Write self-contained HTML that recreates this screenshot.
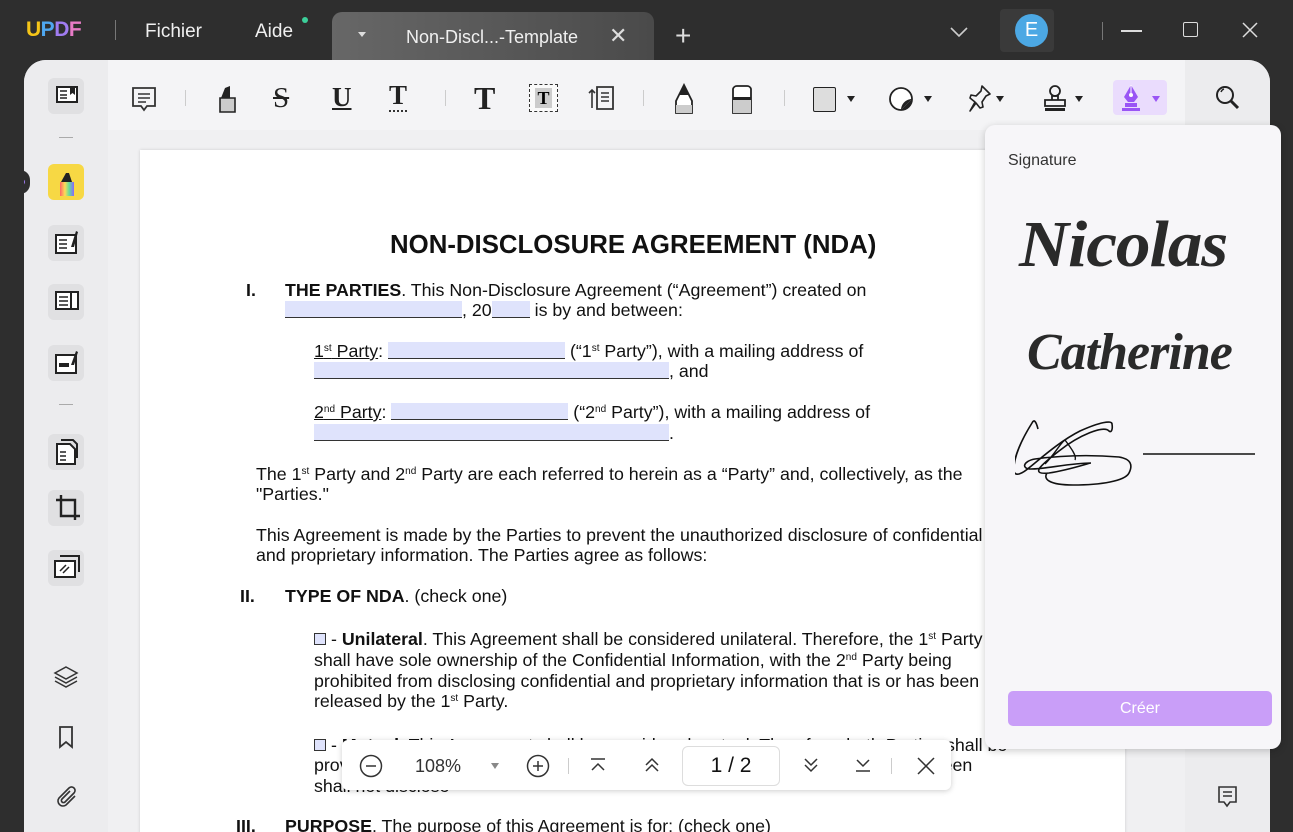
<!DOCTYPE html>
<html><head><meta charset="utf-8"><style>
*{margin:0;padding:0;box-sizing:border-box}
body{width:1293px;height:832px;overflow:hidden;background:#2e2e2e;font-family:"Liberation Sans",sans-serif;position:relative}
.abs{position:absolute}
.tb{color:#f0f0f0;font-size:19px}
#main{left:24px;top:60px;width:1246px;height:772px;background:#f4f4f6;border-radius:22px 22px 0 0;overflow:hidden}
#side{left:0;top:0;width:84px;height:772px;background:#ececee}
.tile{position:absolute;left:24px;width:36px;height:36px;background:#e0e0e2;border-radius:6px}
.sep{position:absolute;left:35px;width:14px;height:1px;background:#aaa}
.ic{position:absolute}
#doc{left:84px;top:70px;width:1077px;height:702px;background:#f0f0f2}
#page{left:32px;top:20px;width:985px;height:700px;background:#fff;box-shadow:0 0 3px rgba(0,0,0,.15)}
.t{position:absolute;font-size:17.8px;color:#111;white-space:nowrap;line-height:20px}
.f{background:#dfe3fc;border-bottom:1px solid #333;display:inline-block;height:17px;vertical-align:-2px}
sup{font-size:10px;vertical-align:6px;line-height:0}
#rs{left:1161px;top:0;width:85px;height:772px;background:#ececee}
#sig{left:985px;top:125px;width:296px;height:624px;background:#f7f6f9;border-radius:10px;box-shadow:0 2px 8px rgba(0,0,0,.2)}
#zb{left:342px;top:740px;width:609px;height:50px;background:#fff;border-radius:6px;box-shadow:0 1px 6px rgba(0,0,0,.2)}
</style></head><body>
<div class="abs" style="left:26px;top:18px;font-weight:bold;font-size:21px;letter-spacing:-0.5px"><span style="color:#f5c518">U</span><span style="color:#4fa7f0">P</span><span style="color:#a07cf0">D</span><span style="color:#e87cc7">F</span></div>
<div class="abs" style="left:115px;top:20px;width:1px;height:20px;background:#777"></div>
<div class="abs tb" style="left:145px;top:21px">Fichier</div>
<div class="abs tb" style="left:255px;top:21px">Aide</div>
<div class="abs" style="left:302px;top:17px;width:6px;height:6px;border-radius:50%;background:#3ccf9a"></div>
<div class="abs" style="left:332px;top:12px;width:322px;height:50px;border-radius:10px 10px 0 0;background:linear-gradient(90deg,#676767,#4a4a4a)"></div>
<div class="abs" style="left:358px;top:32px;border:4px solid transparent;border-top:5px solid #ddd"></div>
<div class="abs tb" style="left:406px;top:27px;font-size:18px">Non-Discl...-Template</div>
<div class="abs tb" style="left:609px;top:23px;font-size:22px;color:#ddd">✕</div>
<div class="abs tb" style="left:675px;top:22px;font-size:28px;font-weight:300;color:#ddd;line-height:28px">+</div>
<svg class="abs" style="left:950px;top:26px" width="18" height="12"><path d="M1 2l8 8 8-8" stroke="#ccc" stroke-width="1.6" fill="none"/></svg>
<div class="abs" style="left:1000px;top:9px;width:54px;height:43px;background:#3a3a3a;border-radius:4px"></div>
<div class="abs" style="left:1015px;top:14px;width:33px;height:33px;border-radius:50%;background:#4ca8e4;color:#fff;font-size:20px;text-align:center;line-height:33px">E</div>
<div class="abs" style="left:1102px;top:22px;width:1px;height:18px;background:#777"></div>
<div class="abs" style="left:1121px;top:30px;width:21px;height:1.5px;background:#ddd"></div>
<div class="abs" style="left:1183px;top:22px;width:15px;height:15px;border:1.5px solid #ddd;border-radius:2px"></div>
<svg class="abs" style="left:1242px;top:22px" width="16" height="16"><path d="M1 1l14 14M15 1L1 15" stroke="#ddd" stroke-width="1.5"/></svg>

<div id="main" class="abs">
 <div id="side" class="abs">
  <div class="tile" style="top:18px"></div>
  <svg class="ic" style="left:31px;top:24px" width="24" height="22"><path d="M2 3h20v15H2z" fill="#fff" stroke="#222" stroke-width="2"/><path d="M5 7h7M5 11h7M5 14h7" stroke="#222" stroke-width="1.6"/><path d="M15 2h5v9l-2.5-2-2.5 2z" fill="#222"/></svg>
  <div class="sep" style="top:77px"></div>
  <div class="abs" style="left:-4px;top:110px;width:10px;height:24px;background:#2e2e2e;border-radius:0 12px 12px 0"></div>
  <div class="abs" style="left:-5px;top:119px;width:6px;height:6px;border-radius:50%;background:#a07cf0"></div>
  <div class="tile" style="top:104px;background:#f7d844"></div>
  <svg class="ic" style="left:32px;top:108px" width="22" height="30"><path d="M5 14l5-9h3l3 9z" fill="#222"/><path d="M4 14h14v14H4z" fill="url(#rb)"/><defs><linearGradient id="rb"><stop offset="0" stop-color="#f66"/><stop offset=".35" stop-color="#fd5"/><stop offset=".65" stop-color="#6d9"/><stop offset="1" stop-color="#86f"/></linearGradient></defs></svg>
  <div class="tile" style="top:165px"></div>
  <svg class="ic" style="left:30px;top:168px" width="26" height="28"><path d="M2 7h20v18H2z" fill="#fff" stroke="#222" stroke-width="2"/><path d="M5 12h8M5 16h8M5 20h8" stroke="#222" stroke-width="1.6"/><path d="M17 19l5-16 2 1-4 15z" fill="#222"/></svg>
  <div class="tile" style="top:224px"></div>
  <svg class="ic" style="left:30px;top:230px" width="26" height="22"><path d="M2 2h22v17H2zM17 2v17" fill="#fff" stroke="#222" stroke-width="2"/><path d="M5 7h9M5 11h9M5 15h9" stroke="#222" stroke-width="1.6"/></svg>
  <div class="tile" style="top:285px"></div>
  <svg class="ic" style="left:30px;top:288px" width="26" height="28"><path d="M2 7h20v18H2z" fill="#fff" stroke="#222" stroke-width="2"/><path d="M5 15h10v4H5z" fill="#222"/><path d="M17 17l5-14 2 1-4 13z" fill="#222"/></svg>
  <div class="sep" style="top:344px"></div>
  <div class="tile" style="top:374px"></div>
  <svg class="ic" style="left:31px;top:378px" width="24" height="28"><path d="M2 6h13l5 5v15H2z" fill="#fff" stroke="#222" stroke-width="2"/><path d="M6 2h12l4 4v14" fill="none" stroke="#222" stroke-width="2"/><path d="M5 14h6M5 18h6M5 22h6" stroke="#222" stroke-width="1.5"/></svg>
  <div class="tile" style="top:430px"></div>
  <svg class="ic" style="left:30px;top:433px" width="28" height="30"><path d="M7 2v21h19M2 7h19v20" fill="none" stroke="#222" stroke-width="2.4"/></svg>
  <div class="tile" style="top:490px"></div>
  <svg class="ic" style="left:29px;top:494px" width="28" height="26"><path d="M7 2h19v16" fill="none" stroke="#222" stroke-width="2"/><path d="M2 7h20v16H2z" fill="#fff" stroke="#222" stroke-width="2"/><path d="M7 17l6-6M10 19l6-6" stroke="#222" stroke-width="1.5"/></svg>
  <svg class="ic" style="left:29px;top:605px" width="26" height="24"><path d="M13 2l11 6-11 6-11-6z M2 12l11 6 11-6 M2 16l11 6 11-6" fill="none" stroke="#333" stroke-width="1.5"/></svg>
  <svg class="ic" style="left:34px;top:665px" width="16" height="24"><path d="M2 2h12v20l-6-5-6 5z" fill="none" stroke="#333" stroke-width="1.8"/></svg>
  <svg class="ic" style="left:30px;top:725px" width="26" height="26"><path d="M21 11l-9 9a5 5 0 01-7-7l10-10a3.5 3.5 0 015 5l-9 9a2 2 0 01-3-3l8-8" fill="none" stroke="#333" stroke-width="1.6"/></svg>
 </div>
 <div id="doc" class="abs">
  <div id="page" class="abs">
   <div class="t" style="left:250px;top:82px;font-size:25.8px;font-weight:bold;line-height:26px">NON-DISCLOSURE AGREEMENT (NDA)</div>
   <div class="t" style="left:106px;top:130px;font-weight:bold">I.</div>
   <div class="t" style="left:145px;top:130px"><b>THE PARTIES</b>. This Non-Disclosure Agreement (“Agreement”) created on</div>
   <div class="t" style="left:145px;top:150px"><span class="f" style="width:177px"></span>, 20<span class="f" style="width:38px"></span> is by and between:</div>
   <div class="t" style="left:174px;top:191px"><u>1<sup>st</sup> Party</u>: <span class="f" style="width:177px"></span> (“1<sup>st</sup> Party”), with a mailing address of</div>
   <div class="t" style="left:174px;top:211px"><span class="f" style="width:355px"></span>, and</div>
   <div class="t" style="left:174px;top:252px"><u>2<sup>nd</sup> Party</u>: <span class="f" style="width:177px"></span> (“2<sup>nd</sup> Party”), with a mailing address of</div>
   <div class="t" style="left:174px;top:273px"><span class="f" style="width:355px"></span>.</div>
   <div class="t" style="left:116px;top:314px">The 1<sup>st</sup> Party and 2<sup>nd</sup> Party are each referred to herein as a “Party” and, collectively, as the</div>
   <div class="t" style="left:116px;top:334px">"Parties."</div>
   <div class="t" style="left:116px;top:375px">This Agreement is made by the Parties to prevent the unauthorized disclosure of confidential</div>
   <div class="t" style="left:116px;top:395px">and proprietary information. The Parties agree as follows:</div>
   <div class="t" style="left:100px;top:436px;font-weight:bold">II.</div>
   <div class="t" style="left:145px;top:436px"><b>TYPE OF NDA</b>. (check one)</div>
   <div class="t" style="left:174px;top:479px"><span style="display:inline-block;width:12px;height:12px;border:1px solid #333;background:#dfe3fc"></span> - <b>Unilateral</b>. This Agreement shall be considered unilateral. Therefore, the 1<sup>st</sup> Party</div>
   <div class="t" style="left:174px;top:500px">shall have sole ownership of the Confidential Information, with the 2<sup>nd</sup> Party being</div>
   <div class="t" style="left:174px;top:521px">prohibited from disclosing confidential and proprietary information that is or has been</div>
   <div class="t" style="left:174px;top:541px">released by the 1<sup>st</sup> Party.</div>
   <div class="t" style="left:174px;top:585px"><span style="display:inline-block;width:12px;height:12px;border:1px solid #333;background:#dfe3fc"></span> - <b>Mutual</b>. This Agreement shall be considered mutual. Therefore, both Parties shall be</div>
   <div class="t" style="left:174px;top:605px">provided with Confidential Information, and both Parties shall be prohibited between</div>
   <div class="t" style="left:174px;top:626px">shall not disclose</div>
   <div class="t" style="left:96px;top:666px;font-weight:bold">III.</div>
   <div class="t" style="left:145px;top:666px"><b>PURPOSE</b>. The purpose of this Agreement is for: (check one)</div>
  </div>
 </div>
 <div id="rs" class="abs"></div>
 <svg class="ic" style="left:1192px;top:724px" width="24" height="26"><path d="M3 3h17v15h-6l-3 4-3-4H3z" fill="none" stroke="#333" stroke-width="1.6"/><path d="M7 8h9M7 12h9" stroke="#333" stroke-width="1.4"/></svg>
 <svg class="ic" style="left:107px;top:26px" width="28" height="28"><path d="M2 2h22v18h-8l-3 4-3-4H2z" fill="none" stroke="#333" stroke-width="1.8"/><path d="M7 8h12M7 12h12M7 16h8" stroke="#333" stroke-width="1.5"/></svg>
 <div class="abs" style="left:161px;top:30px;width:1px;height:16px;background:#ccc"></div>
 <svg class="ic" style="left:192px;top:24px" width="24" height="30"><path d="M5 14l4-10 5-2v12z" fill="#222"/><path d="M4 14h15v14H4z" fill="#ccc" stroke="#222" stroke-width="1.6"/></svg>
 <div class="abs" style="left:249px;top:22px;font-family:'Liberation Serif',serif;font-size:29px;color:#222;text-decoration:line-through">S</div>
 <div class="abs" style="left:308px;top:22px;font-family:'Liberation Serif',serif;font-weight:bold;font-size:27px;color:#222;text-decoration:underline">U</div>
 <div class="abs" style="left:365px;top:21px;font-family:'Liberation Serif',serif;font-weight:bold;font-size:27px;color:#222;border-bottom:2px dotted #333;line-height:29px">T</div>
 <div class="abs" style="left:421px;top:30px;width:1px;height:16px;background:#ccc"></div>
 <div class="abs" style="left:450px;top:20px;font-family:'Liberation Serif',serif;font-weight:bold;font-size:32px;color:#222">T</div>
 <div class="abs" style="left:505px;top:24px;width:29px;height:28px;border:1.5px dashed #333;background:#fafafa;font-family:'Liberation Serif',serif;font-weight:bold;font-size:18px;text-align:center;line-height:26px"><span style="background:#ccc;padding:0 2px">T</span></div>
 <svg class="ic" style="left:563px;top:24px" width="30" height="28"><path d="M10 3h16v22H10z" fill="none" stroke="#333" stroke-width="1.8"/><path d="M14 9h8M14 13h8M14 17h8" stroke="#333" stroke-width="1.4"/><path d="M5 24V6M2 9l3-3 3 3" fill="none" stroke="#333" stroke-width="1.6"/></svg>
 <div class="abs" style="left:619px;top:30px;width:1px;height:16px;background:#ccc"></div>
 <svg class="ic" style="left:648px;top:23px" width="24" height="32"><path d="M4 18l8-16 8 16v12H4z" fill="#fff" stroke="#222" stroke-width="1.8"/><path d="M7 12l5-10 5 10z" fill="#222"/><path d="M4 22h16v8H4z" fill="#ccc"/></svg>
 <svg class="ic" style="left:706px;top:25px" width="24" height="30"><path d="M3 4a4 4 0 014-3h10a4 4 0 014 3v24H3z" fill="#fff" stroke="#222" stroke-width="1.8"/><path d="M3 12h18v3H3z" fill="#222"/><path d="M3 15h18v13H3z" fill="#ccc"/></svg>
 <div class="abs" style="left:760px;top:30px;width:1px;height:16px;background:#ccc"></div>
 <div class="abs" style="left:789px;top:27px;width:23px;height:25px;border:1.6px solid #222;border-radius:2px;background:#ddd"></div>
 <div class="abs" style="left:823px;top:36px;border:4px solid transparent;border-top:6px solid #222"></div>
 <svg class="ic" style="left:863px;top:25px" width="28" height="28"><circle cx="14" cy="14" r="11" fill="#fff" stroke="#222" stroke-width="1.8"/><path d="M25 14a11 11 0 01-11 11L25 14z" fill="#222"/><path d="M14 25c0-6 5-11 11-11" fill="#222"/></svg>
 <div class="abs" style="left:900px;top:36px;border:4px solid transparent;border-top:6px solid #222"></div>
 <svg class="ic" style="left:942px;top:24px" width="28" height="30"><path d="M16 2l8 8-4 2-4 6 1 5-3 1-4-5-6 8 5-9-5-4 1-3 5 1 5-5z" fill="none" stroke="#222" stroke-width="1.6" stroke-linejoin="round"/></svg>
 <div class="abs" style="left:972px;top:36px;border:4px solid transparent;border-top:6px solid #222"></div>
 <svg class="ic" style="left:1018px;top:24px" width="26" height="30"><circle cx="13" cy="7" r="5" fill="none" stroke="#222" stroke-width="1.8"/><path d="M10 12h6v4H10zM3 16h20v6H3z" fill="none" stroke="#222" stroke-width="1.8"/><path d="M3 24h20v3H3z" fill="#222"/></svg>
 <div class="abs" style="left:1051px;top:36px;border:4px solid transparent;border-top:6px solid #222"></div>
 <div class="abs" style="left:1089px;top:20px;width:54px;height:35px;background:#eadcfd;border-radius:4px"></div>
 <svg class="ic" style="left:1095px;top:23px" width="24" height="30"><path d="M12 2l7 12-4 5H9l-4-5z" fill="#9a55f5"/><circle cx="12" cy="12" r="2" fill="#fff"/><path d="M12 2v8" stroke="#fff" stroke-width="1"/><path d="M6 20h12v4H6zM3 25h18v3H3z" fill="#9a55f5"/></svg>
 <div class="abs" style="left:1128px;top:36px;border:4px solid transparent;border-top:6px solid #9a55f5"></div>
 <svg class="ic" style="left:1191px;top:25px" width="26" height="26"><circle cx="10" cy="10" r="8" fill="none" stroke="#222" stroke-width="2"/><path d="M16 16l7 7" stroke="#222" stroke-width="3"/><path d="M6 7a5 5 0 013-3" stroke="#222" stroke-width="1.4" fill="none"/></svg>
</div>

<div id="sig" class="abs">
 <div class="abs" style="left:23px;top:27px;font-size:16px;color:#333">Signature</div>
 <div class="abs" style="left:34px;top:82px;font-family:'Liberation Serif',serif;font-style:italic;font-weight:bold;font-size:66px;color:#2a2a2a;letter-spacing:-1px;transform:scaleX(1.05);transform-origin:left">Nicolas</div>
 <div class="abs" style="left:42px;top:198px;font-family:'Liberation Serif',serif;font-style:italic;font-weight:bold;font-size:52px;color:#2a2a2a;letter-spacing:-1px">Catherine</div>
 <svg class="abs" style="left:30px;top:283px" width="250" height="80"><path d="M23 21c-2-8-4-10-6-6-10 16-19 35-18 48 1 6 8 3 16-4 10-8 30-26 50-36 20-9 32-11 32-7 1 6-1 9-3 7-5-6-30 4-50 20-18 14-30 24-10 22 20-3 40-10 42-10-20 0-46 6-60 6-10 0-8-8 4-10 30-4 60-4 84-2 12 2 14 8 10 16-4 8-28 12-56 12-24 0-30-6-26-12" fill="none" stroke="#111" stroke-width="1.6"/><path d="M30 56c10-10 16-22 20-24 6 8 12 16 10 20" fill="none" stroke="#111" stroke-width="1.4"/><path d="M128 46h112" stroke="#111" stroke-width="1.6"/></svg>
 <div class="abs" style="left:23px;top:566px;width:264px;height:35px;background:#c99ef8;border-radius:5px;color:#fff;font-size:16px;text-align:center;line-height:35px">Créer</div>
</div>

<div id="zb" class="abs">
 <svg class="abs" style="left:17px;top:14px" width="24" height="24"><circle cx="12" cy="12" r="10.5" fill="none" stroke="#333" stroke-width="1.5"/><path d="M7 12h10" stroke="#333" stroke-width="1.5"/></svg>
 <div class="abs" style="left:73px;top:16px;font-size:18px;color:#333">108%</div>
 <div class="abs" style="left:149px;top:23px;border:4px solid transparent;border-top:6px solid #888"></div>
 <svg class="abs" style="left:184px;top:14px" width="24" height="24"><circle cx="12" cy="12" r="10.5" fill="none" stroke="#333" stroke-width="1.5"/><path d="M7 12h10M12 7v10" stroke="#333" stroke-width="1.5"/></svg>
 <div class="abs" style="left:226px;top:18px;width:1px;height:16px;background:#ccc"></div>
 <svg class="abs" style="left:247px;top:17px" width="18" height="16"><path d="M2 2h14M3 13l6-6 6 6" fill="none" stroke="#333" stroke-width="1.5"/></svg>
 <svg class="abs" style="left:301px;top:16px" width="18" height="18"><path d="M3 9l6-6 6 6M3 15l6-6 6 6" fill="none" stroke="#333" stroke-width="1.5"/></svg>
 <div class="abs" style="left:340px;top:6px;width:98px;height:40px;border:1px solid #ddd;border-radius:6px;font-size:21px;color:#111;text-align:center;line-height:38px">1 / 2</div>
 <svg class="abs" style="left:460px;top:16px" width="18" height="18"><path d="M3 3l6 6 6-6M3 9l6 6 6-6" fill="none" stroke="#333" stroke-width="1.5"/></svg>
 <svg class="abs" style="left:512px;top:17px" width="18" height="16"><path d="M3 3l6 6 6-6M2 14h14" fill="none" stroke="#333" stroke-width="1.5"/></svg>
 <div class="abs" style="left:549px;top:18px;width:1px;height:16px;background:#ccc"></div>
 <svg class="abs" style="left:574px;top:16px" width="20" height="20"><path d="M2 2l16 16M18 2L2 18" stroke="#333" stroke-width="1.5"/></svg>
</div>
</body></html>
